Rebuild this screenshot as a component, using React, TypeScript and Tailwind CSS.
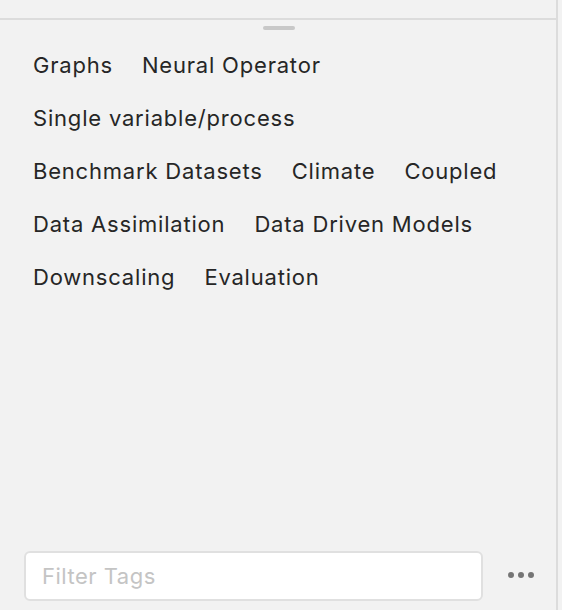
import React from "react";

const tags = [
  "Graphs",
  "Neural Operator",
  "Single variable/process",
  "Benchmark Datasets",
  "Climate",
  "Coupled",
  "Data Assimilation",
  "Data Driven Models",
  "Downscaling",
  "Evaluation",
];

const App = () => {
  return (
    <div
      className="flex h-[610px] w-[562px] bg-[#f2f2f2]"
      style={{ fontFamily: "Inter, 'Noto Sans', sans-serif" }}
    >
      <div className="flex w-[558px] flex-col border-r-2 border-[#dcdcdc]">
        <div className="h-[20px] border-b-2 border-[#dcdcdc]"></div>
        <div className="flex justify-center pt-[6px]">
          <div className="ml-[2px] h-[4px] w-[32px] rounded-full bg-[#c8c8c8]"></div>
        </div>
        <div className="flex flex-wrap content-start gap-x-[29px] pl-[33px] pr-[20px] pt-[9px]">
          {tags.map((t) => (
            <span key={t} className="text-[22px] leading-[53px] tracking-[0.8px] text-[#262626]">
              {t}
            </span>
          ))}
        </div>
        <div className="mt-auto flex items-center pb-[9px] pl-[24px]">
          <input
            placeholder="Filter Tags"
            className="h-[50px] w-[459px] rounded-[6px] border-2 border-[#e0e0e0] bg-white px-[16px] text-[22px] tracking-[0.5px] text-[#262626] outline-none placeholder:text-[#c4c4c4]"
          />
          <div className="ml-[25px] flex gap-[4px] pb-[2px]">
            <span className="h-[6px] w-[6px] rounded-full bg-[#757575]"></span>
            <span className="h-[6px] w-[6px] rounded-full bg-[#757575]"></span>
            <span className="h-[6px] w-[6px] rounded-full bg-[#757575]"></span>
          </div>
        </div>
      </div>
    </div>
  );
};

export default App;
